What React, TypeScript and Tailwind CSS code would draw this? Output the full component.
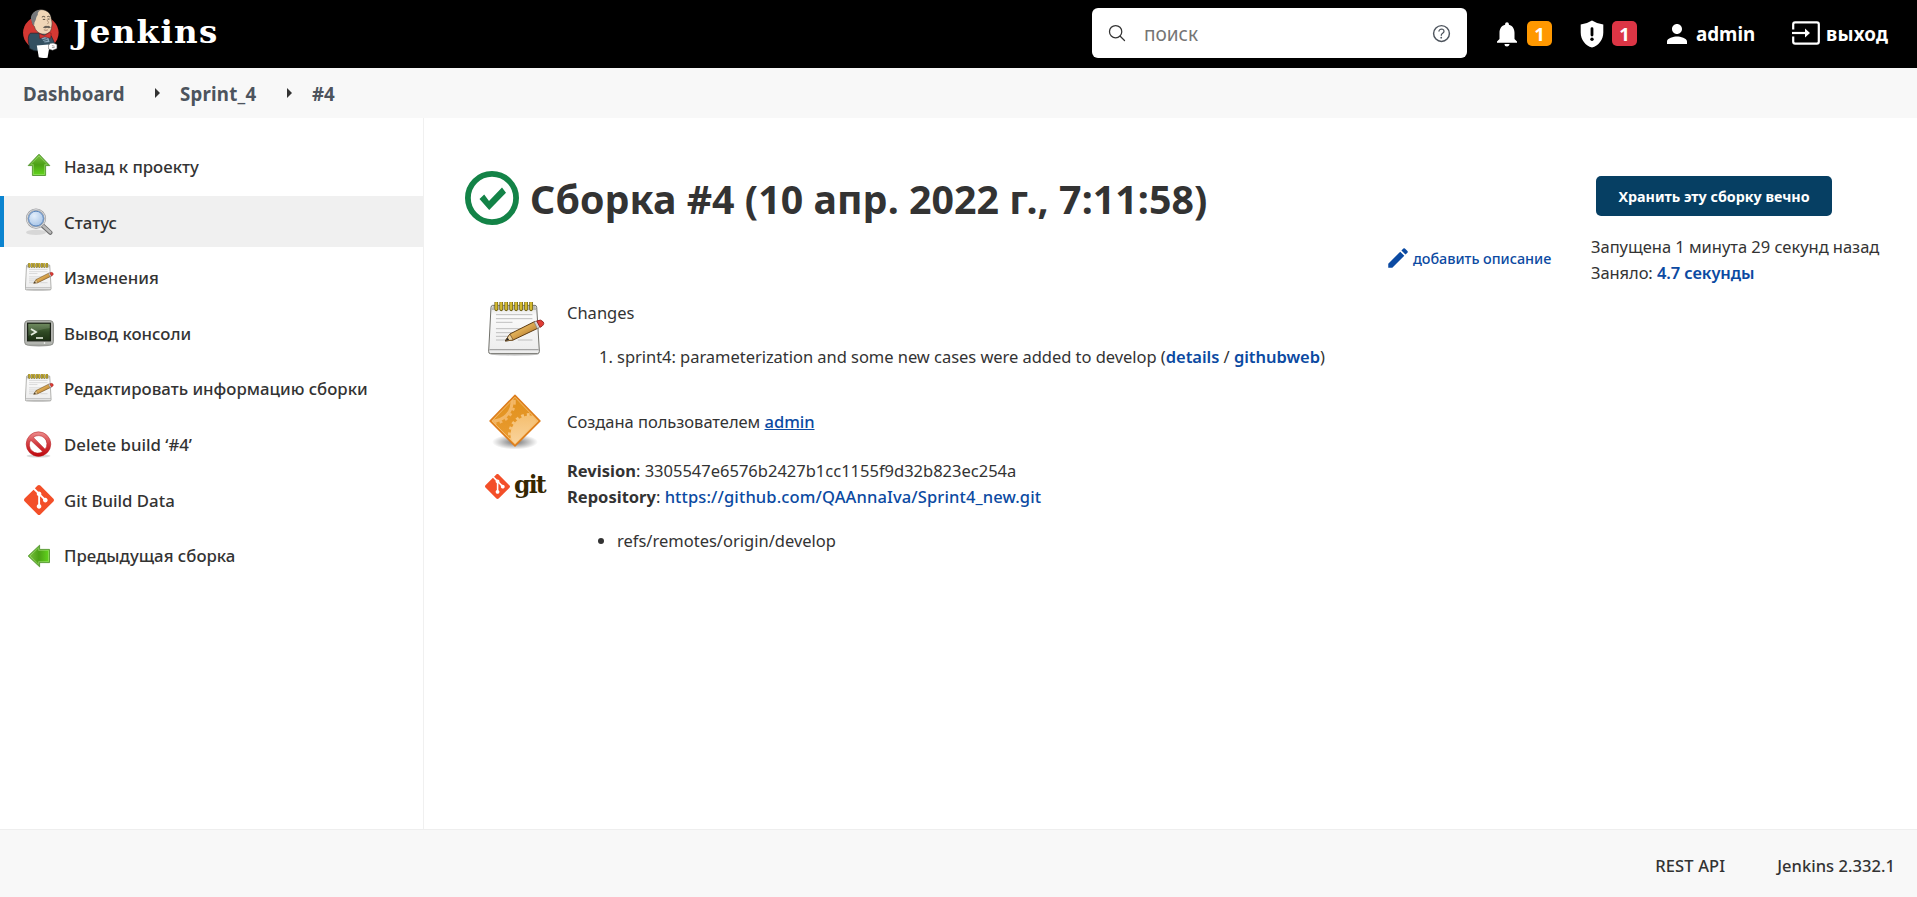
import React from "react";
import type { ReactNode } from "react";
import { IoSearchOutline, IoHelpCircleOutline } from "react-icons/io5";
import { MdNotifications, MdPerson, MdEdit } from "react-icons/md";
import { SiGit } from "react-icons/si";

type IconProps = { className?: string };

function Butler({ className }: IconProps) {
  return (
    <svg viewBox="40 20 110 155" className={className}>
      <ellipse cx="93" cy="97" rx="53" ry="50" fill="#d33833" />
      <path d="M62 98 Q54 104 56 124 L60 144 Q74 154 90 150 L132 144 L134 128 L124 106 L104 98 Z" fill="#335061" stroke="#1b242b" strokeWidth="2" />
      <path d="M88 104 L114 106 L119 124 L104 126 Z" fill="#8ba6ba" />
      <path d="M68 50 C68 34 80 28 96 28 C114 29 124 42 124 56 C127 64 127 72 125 80 C124 94 114 101 103 101 C89 101 77 92 74 78 C68 74 66 66 68 50 Z" fill="#f0d6b7" stroke="#2b2b2b" strokeWidth="1.5" />
      <path d="M64 58 C60 42 76 29 92 29 C86 33 83 38 84 44 C80 48 79 54 78 58 L74 66 L73 76 L68 70 Z" fill="#75777a" />
      <path d="M96 50 q5 -4 10 0 M112 49 q5 -3 8 1" fill="none" stroke="#3b332c" strokeWidth="2.5" />
      <path d="M99 57 h7 M113 56 h6" stroke="#3b332c" strokeWidth="2.5" />
      <path d="M111 58 q9 9 2 13" fill="none" stroke="#a58a6e" strokeWidth="2.5" />
      <path d="M99 81 q8 -8 13 -4 q6 -3 11 5 q-7 2 -11 0 q-6 3 -13 -1Z" fill="#6a6258" />
      <path d="M102 88 q7 3 12 0" fill="none" stroke="#8a5f50" strokeWidth="2" />
      <path d="M88 99 L103 105 L119 96 L124 99 L122 113 L105 109 L90 114 Z" fill="#d33833" stroke="#6d1618" strokeWidth="1.5" />
      <path d="M96 118 L112 114 M98 123 L114 119" stroke="#335061" strokeWidth="2.5" />
      <path d="M81 135 L116 132 L118 142 L113 171 Q98 174 87 170 Z" fill="#fff" />
      <path d="M116 134 Q120 126 132 128 L141 132 L141 144 L128 149 L116 145 Z" fill="#fff" stroke="#555" strokeWidth="1.5" />
      <path d="M126 135 l8 2 M126 141 l8 0" stroke="#777" strokeWidth="2" />
    </svg>
  );
}

function Notepad({ className }: IconProps) {
  return (
    <svg viewBox="0 0 172 162" className={className} preserveAspectRatio="none">
      <defs>
        <linearGradient id="paper" x1="0" y1="0" x2="0" y2="1">
          <stop offset="0" stopColor="#dcdcdc" />
          <stop offset=".2" stopColor="#fafafa" />
          <stop offset="1" stopColor="#ececec" />
        </linearGradient>
        <linearGradient id="wood" x1="0" y1="0" x2="1" y2="1">
          <stop offset=".3" stopColor="#f0c468" />
          <stop offset=".8" stopColor="#b5782a" />
        </linearGradient>
      </defs>
      <ellipse cx="80" cy="156" rx="74" ry="5" fill="#000" opacity=".2" />
      <path d="M14 10 H142 Q146 10 147 16 L155 148 Q155 155 149 155 H8 Q1 155 2 148 L9 16 Q10 10 14 10Z" fill="url(#paper)" stroke="#6f6f69" strokeWidth="3" />
      <path d="M4 143 H153" stroke="#a4a4a4" strokeWidth="4" />
      <path d="M10 24 L16 12 H142 L146 24Z" fill="#b9b9b4" />
      <path d="M25 2V22M40 2V22M55 2V22M70 2V22M85 2V22M100 2V22M115 2V22M130 2V22" stroke="#6b5c10" strokeWidth="11" strokeLinecap="round" />
      <path d="M25 3V21M40 3V21M55 3V21M70 3V21M85 3V21M100 3V21M115 3V21M130 3V21" stroke="#d3b92f" strokeWidth="7" strokeLinecap="round" />
      <path d="M24 38H134M24 50H134M24 61H74M24 80H134M24 92H100M24 103H70M24 114H60M90 114H134" stroke="#b4b4b4" strokeWidth="2.5" />
      <path d="M52 117 L66 96 L142 58 L152 78 L76 114 Z" fill="url(#wood)" stroke="#5d3b12" strokeWidth="3" strokeLinejoin="round" />
      <path d="M52 117 L66 96 L76 114Z" fill="#ecd3a2" stroke="#5d3b12" strokeWidth="2" />
      <path d="M52 117 L59 107 L64 113Z" fill="#222" />
      <path d="M139 60 L149 56 L158 74 L149 80Z" fill="#d5d5d5" stroke="#777" strokeWidth="2" />
      <path d="M147 57 Q160 50 167 60 Q172 69 157 76Z" fill="#e13c35" stroke="#8c1b17" strokeWidth="2.5" />
    </svg>
  );
}

function GreenArrow({ className }: IconProps) {
  return (
    <svg viewBox="0 0 24 24" className={className}>
      <defs>
        <linearGradient id="green" x1="0" y1="0" x2="0" y2="1">
          <stop offset="0" stopColor="#7cc242" />
          <stop offset=".5" stopColor="#4ba015" />
          <stop offset="1" stopColor="#63d81c" />
        </linearGradient>
      </defs>
      <path d="M12 1.2 L22.8 12.6 H18.6 V22.5 H5.4 V12.6 H1.2Z" fill="url(#green)" stroke="#5c9c3a" strokeWidth="1" strokeLinejoin="round" />
      <path d="M12 3 L20.3 11.6 H17.6 V21.5 H6.4 V11.6 H3.7Z" fill="none" stroke="#a6e07c" strokeWidth=".7" opacity=".8" />
    </svg>
  );
}

function Magnifier() {
  return (
    <svg viewBox="0 0 28 28" className="size-7">
      <defs>
        <radialGradient id="lens" cx=".4" cy=".35" r=".8">
          <stop offset="0" stopColor="#e4effb" />
          <stop offset="1" stopColor="#93b6e0" />
        </radialGradient>
      </defs>
      <ellipse cx="11" cy="24.4" rx="10" ry="2.6" fill="#000" opacity=".1" />
      <path d="M17.5 17.5 L25.3 24.6" stroke="#6d6d6d" strokeWidth="4.4" strokeLinecap="round" />
      <path d="M17.5 17.3 L25.2 24.3" stroke="#b9b9b9" strokeWidth="2.6" strokeLinecap="round" />
      <circle cx="11" cy="10.6" r="9" fill="url(#lens)" stroke="#9a9c9f" strokeWidth="2.2" />
      <circle cx="11" cy="10.6" r="9" fill="none" stroke="#dcdddf" strokeWidth="1" />
      <circle cx="11" cy="10.6" r="7.4" fill="none" stroke="#5b86bd" strokeWidth="1" />
    </svg>
  );
}

function Terminal() {
  return (
    <svg viewBox="0 0 30 27" className="mt-0.5 h-[27px] w-[30px]">
      <defs>
        <linearGradient id="screen" x1="0" y1="0" x2="0" y2="1">
          <stop offset="0" stopColor="#5d7d4a" />
          <stop offset=".5" stopColor="#2f4a24" />
          <stop offset="1" stopColor="#1c3013" />
        </linearGradient>
      </defs>
      <ellipse cx="15" cy="25.4" rx="10" ry="1.3" fill="#000" opacity=".25" />
      <rect x=".6" y=".6" width="28.8" height="24.6" rx="3.5" fill="#b3b5b0" stroke="#8b8d88" />
      <rect x="3.6" y="3.2" width="22.8" height="17.6" fill="url(#screen)" stroke="#1a2016" strokeWidth="1.2" />
      <path d="M4.3 4 H25.8 V8 Q14 9 4.3 16Z" fill="#fff" opacity=".12" />
      <path d="M7 9 L12 12 L7 15" fill="none" stroke="#e6eee0" strokeWidth="1.8" />
      <path d="M12 18 H19" stroke="#e6eee0" strokeWidth="1.6" />
      <circle cx="20.5" cy="23" r=".8" fill="#fff" />
    </svg>
  );
}

function Prohibited() {
  return (
    <svg viewBox="0 0 27 27" className="mr-px mt-px size-[27px]">
      <defs>
        <linearGradient id="red" x1="0" y1="0" x2="0" y2="1">
          <stop offset="0" stopColor="#ee8f8f" />
          <stop offset=".5" stopColor="#d23b3f" />
          <stop offset="1" stopColor="#c0060c" />
        </linearGradient>
      </defs>
      <ellipse cx="13.5" cy="25" rx="12" ry="1.6" fill="#000" opacity=".15" />
      <path fillRule="evenodd" d="M13.5 .8a12.3 12.3 0 1 0 0 24.6 12.3 12.3 0 0 0 0-24.6Zm-5.2 5.6 11.8 11.8A8.4 8.4 0 0 0 8.3 6.4Zm-2.6 2.8A8.4 8.4 0 0 0 17.6 20.6Z" fill="url(#red)" stroke="#b3191d" strokeWidth=".5" />
    </svg>
  );
}

function GearSign() {
  return (
    <svg viewBox="0 0 52 56" className="h-14 w-[52px]">
      <defs>
        <linearGradient id="amber" x1="0" y1="0" x2="0" y2="1">
          <stop offset="0" stopColor="#e0901b" />
          <stop offset="1" stopColor="#eb9d33" />
        </linearGradient>
        <radialGradient id="shade">
          <stop offset="0" stopColor="#000" stopOpacity=".55" />
          <stop offset="1" stopColor="#000" stopOpacity="0" />
        </radialGradient>
        <linearGradient id="gear" x1="0" y1="0" x2="0" y2="1">
          <stop offset="0" stopColor="#f5bf70" />
          <stop offset="1" stopColor="#fbdcae" />
        </linearGradient>
        <clipPath id="sign"><path d="M26 3 L48.5 27 L26 50 L3.5 27Z" /></clipPath>
      </defs>
      <ellipse cx="26" cy="48" rx="23" ry="7.5" fill="url(#shade)" />
      <path d="M26 1.2 L51 27 L26 52 L1 27Z" fill="url(#amber)" stroke="#dd7c1c" strokeWidth="1.4" strokeLinejoin="round" />
      <g clipPath="url(#sign)" fill="none">
        <circle cx="4" cy="8" r="19" stroke="#f3b767" strokeWidth="3" />
        <circle cx="4" cy="8" r="21.5" stroke="#f3b767" strokeWidth="2.6" strokeDasharray="2.8 3.2" />
        <circle cx="41" cy="41" r="19.5" fill="url(#gear)" />
        <circle cx="41" cy="41" r="20.5" stroke="#f6c47c" strokeWidth="3" strokeDasharray="2.8 3" />
      </g>
      <path d="M26 3.2 L49 27 L26 50 L3 27Z" fill="none" stroke="#f7c07a" strokeWidth=".8" />
    </svg>
  );
}

function StatusOk() {
  return (
    <svg viewBox="0 0 54 54" className="size-[54px] shrink-0">
      <circle cx="27" cy="27" r="24.1" fill="none" stroke="#138347" strokeWidth="5.8" />
      <path d="M14.5 28 L24.2 39 L41 21.7 L37 16.5 L24 30 L19.2 23.5Z" fill="#138347" />
    </svg>
  );
}

function Shield() {
  return (
    <svg viewBox="0 0 24 28" className="h-7 w-6">
      <path d="M12 .4 Q17 3.6 23.3 4.6 V12.5 C23.3 20 18.5 25.5 12 27.6 C5.5 25.5 .7 20 .7 12.5 V4.6 Q7 3.6 12 .4Z" fill="#fff" />
      <path d="M12 8.7 V15" stroke="#000" strokeWidth="2.8" strokeLinecap="round" />
      <circle cx="12" cy="19.3" r="1.7" fill="#000" />
    </svg>
  );
}

function Exit() {
  return (
    <svg viewBox="0 0 28 24" className="h-6 w-7" fill="none" stroke="#fff" strokeWidth="2.2">
      <path d="M1.2 8.5 V3.2 Q1.2 1.3 3.1 1.3 H24.9 Q26.8 1.3 26.8 3.2 V20.8 Q26.8 22.7 24.9 22.7 H3.1 Q1.2 22.7 1.2 20.8 V15.5" />
      <path d="M0 12 H14" />
      <path d="M13 7.5 L18 12 L13 16.5Z" fill="#fff" stroke="none" />
    </svg>
  );
}

const tasks: { label: string; icon: ReactNode; active?: boolean }[] = [
  { label: "Назад к проекту", icon: <GreenArrow className="mb-0.5 mr-px size-6" /> },
  { label: "Статус", icon: <Magnifier />, active: true },
  { label: "Изменения", icon: <Notepad className="h-7 w-[29px]" /> },
  { label: "Вывод консоли", icon: <Terminal /> },
  { label: "Редактировать информацию сборки", icon: <Notepad className="h-7 w-[29px]" /> },
  { label: "Delete build ‘#4’", icon: <Prohibited /> },
  { label: "Git Build Data", icon: <SiGit className="size-[30px] text-[#f34f29]" /> },
  { label: "Предыдущая сборка", icon: <GreenArrow className="mr-px mt-0.5 size-6 -rotate-90" /> },
];

function Crumb({ children, className }: { children: ReactNode; className: string }) {
  return <a className={`block whitespace-nowrap text-[18.7px] font-bold text-[#4d545d] ${className}`}>{children}</a>;
}

function Chevron({ className }: IconProps) {
  return (
    <svg viewBox="0 0 5 10" className={`mb-0.5 h-2.5 w-[5px] ${className}`}>
      <path d="M0 0 L5 5 L0 10Z" fill="#333" />
    </svg>
  );
}

function Badge({ children, className }: { children: ReactNode; className: string }) {
  return (
    <span className={`mb-px flex size-[25px] items-center justify-center rounded-[5px] text-[18.5px] font-bold text-white ${className}`}>{children}</span>
  );
}

const link = "font-medium text-[#0b4aa2]";
const strongLink = "font-semibold text-[#0b4aa2]";

export default function App() {
  return (
    <div className="flex h-[897px] w-[1917px] flex-col overflow-hidden bg-white font-['Noto_Sans',sans-serif] text-[16.5px] leading-[26px] text-[#333]">
      <header className="flex h-[68px] shrink-0 items-center bg-black pl-[23px] text-white">
        <Butler className="mb-[3px] h-[52px] w-[37px]" />
        <span className="ml-[13px] w-[147px] whitespace-nowrap pb-[5px] font-['DejaVu_Serif',serif] text-[32.5px] font-bold tracking-[1.3px]">Jenkins</span>
        <div className="ml-[872px] mb-0.5 flex h-[50px] w-[375px] items-center rounded-md bg-white pl-[15px]">
          <IoSearchOutline className="size-[20px] text-[#333]" />
          <span className="ml-[17px] mt-0.5 flex-1 text-[19px] text-[#757575]">поиск</span>
          <IoHelpCircleOutline className="mr-[14px] size-[23px] text-[#4d545d]" />
        </div>
        <MdNotifications className="ml-[25px] size-[30px]" />
        <Badge className="ml-[5px] bg-[#ff9800]">1</Badge>
        <span className="ml-7 mb-px"><Shield /></span>
        <Badge className="ml-2 bg-[#dc3545]">1</Badge>
        <MdPerson className="ml-[25px] size-[30px]" />
        <span className="ml-[4px] w-[60px] text-[18.8px] font-bold">admin</span>
        <span className="ml-9 -mt-0.5"><Exit /></span>
        <span className="ml-[6px] text-[18.8px] font-bold tracking-[0.2px]">выход</span>
      </header>

      <nav className="flex h-[50px] shrink-0 items-center bg-[#f8f8f8] pl-[23px] pt-[2px]">
        <Crumb className="w-[101px] tracking-[0.1px]">Dashboard</Crumb>
        <Chevron className="ml-[31px]" />
        <Crumb className="ml-[20px] w-[77px] tracking-[0.2px]">Sprint_4</Crumb>
        <Chevron className="ml-[30px]" />
        <Crumb className="ml-[20px]">#4</Crumb>
      </nav>

      <div className="flex min-h-0 flex-1">
        <aside className="flex w-[424px] shrink-0 flex-col gap-[4.6px] border-r border-[#f0f0f0] pt-[22.5px]">
          {tasks.map((t) => (
            <a
              key={t.label}
              className={`flex h-[51px] items-center border-l-4 pl-[19px] text-[16.8px] font-medium ${
                t.active ? "border-[#0b84d0] bg-[#f0f0f0]" : "border-transparent"
              }`}
            >
              <span className="flex w-8 justify-center">{t.icon}</span>
              <span className="ml-[9px] mt-0.5 whitespace-nowrap">{t.label}</span>
            </a>
          ))}
        </aside>

        <main className="flex flex-1 pl-[41px]">
          <div className="w-[1087px] shrink-0">
            <div className="mt-[53px] flex h-[54px] items-center">
              <StatusOk />
              <h1 className="ml-[11px] mt-0.5 whitespace-nowrap text-[39.3px] font-bold leading-[54px] tracking-[0.05px]">Сборка #4 (10 апр. 2022 г., 7:11:58)</h1>
            </div>
            <div className="mt-[20px] flex h-[26px] items-center justify-end text-[14.4px]">
              <MdEdit className="size-[26px] text-[#0b4aa2]" />
              <a className={`ml-[2px] mt-px w-[139px] whitespace-nowrap tracking-[-0.04px] ${link}`}>добавить описание</a>
            </div>
            <div className="mt-[29px] flex">
              <Notepad className="ml-[23px] mt-0.5 h-[54px] w-[57px]" />
              <div className="ml-[22px]">
                <p>Changes</p>
                <ol className="mt-[18px] flex">
                  <li className="ml-[32px] whitespace-nowrap tracking-[-0.04px]">
                    1. sprint4: parameterization and some new cases were added to develop (
                    <a className={strongLink}>details</a> / <a className={strongLink}>githubweb</a>)
                  </li>
                </ol>
              </div>
            </div>
            <div className="mt-[24px] flex h-14 items-center">
              <span className="ml-6"><GearSign /></span>
              <p className="ml-[26px] tracking-[-0.03px]">
                Создана пользователем <a className={`underline ${link}`}>admin</a>
              </p>
            </div>
            <div className="mt-[8px] flex">
              <div className="ml-[20px] mt-[16px] flex h-[25px] items-center">
                <SiGit className="size-[25px] text-[#f34f29]" />
                <span className="ml-[4px] mb-1 w-[31px] font-['DejaVu_Serif',serif] text-[23.5px] font-bold tracking-[-1.8px] text-[#362701]">git</span>
              </div>
              <div className="ml-[22px]">
                <p className="whitespace-nowrap"><b>Revision</b>: 3305547e6576b2427b1cc1155f9d32b823ec254a</p>
                <p className="whitespace-nowrap"><b>Repository</b>: <a className={`tracking-[0.12px] ${link}`}>https://github.com/QAAnnaIva/Sprint4_new.git</a></p>
                <div className="mt-[18px] ml-[31px] flex items-center">
                  <span className="size-[6px] rounded-full bg-[#333]" />
                  <span className="ml-[13px]">refs/remotes/origin/develop</span>
                </div>
              </div>
            </div>
          </div>
          <div className="ml-[39px] pt-[58px]">
            <button className="ml-[5px] flex h-10 w-[236px] items-center justify-center whitespace-nowrap rounded-[5px] bg-[#063f63] pt-px text-[14.3px] font-bold text-white">
              Хранить эту сборку вечно
            </button>
            <p className="mt-[18px] whitespace-nowrap tracking-[-0.03px]">Запущена 1 минута 29 секунд назад</p>
            <p className="whitespace-nowrap tracking-[-0.08px]">Заняло: <a className={strongLink}>4.7 секунды</a></p>
          </div>
        </main>
      </div>

      <footer className="flex h-[68px] shrink-0 items-center justify-end border-t border-[#eeeeee] bg-[#f8f8f8] pt-1 font-medium">
        <a className="w-[72px] whitespace-nowrap tracking-[0.15px]">REST API</a>
        <a className="ml-[50px] mr-[22px] whitespace-nowrap tracking-[0.05px]">Jenkins 2.332.1</a>
      </footer>
    </div>
  );
}
